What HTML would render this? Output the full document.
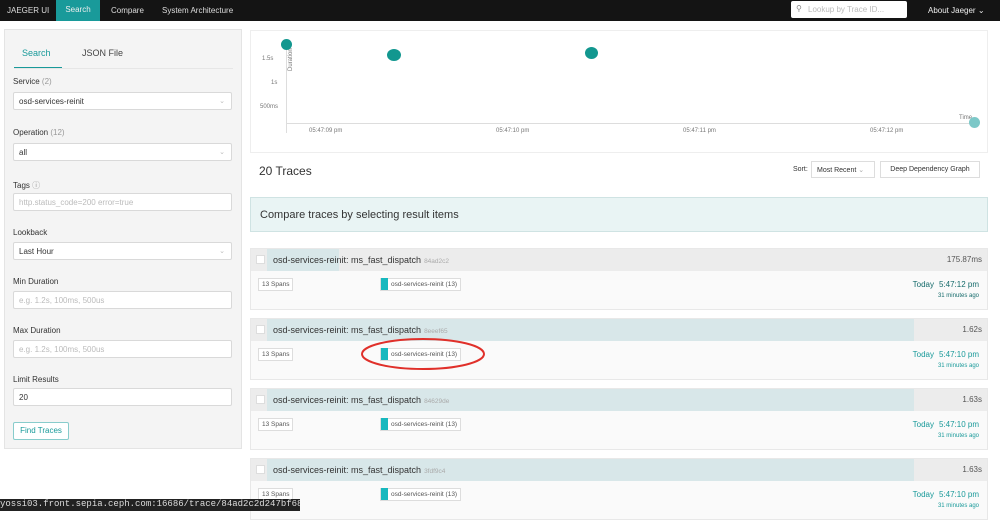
<!DOCTYPE html>
<html><head><meta charset="utf-8"><style>
*{box-sizing:border-box;margin:0;padding:0}
body{width:1000px;height:508px;overflow:hidden;background:#fff;font-family:"Liberation Sans",sans-serif;color:#333;position:relative}
.nav{position:absolute;left:0;top:0;width:1000px;height:21px;background:#141414;color:#ddd;font-size:8px}
.nav span{position:absolute;top:6px}
.nav .act{position:absolute;left:56px;top:0;width:44px;height:21px;background:#199a9a;color:#eee;text-align:center;line-height:20px}
.lookup{position:absolute;left:791px;top:1px;width:116px;height:17px;background:#fff;border-radius:2px;color:#bbb;font-size:8px;padding:4px 0 0 17px}
.side{position:absolute;left:4px;top:29px;width:238px;height:420px;background:#f4f4f4;border:1px solid #e4e4e4}
.lab{position:absolute;left:13px;font-size:8px;color:#333}
.lab i{font-style:normal;color:#999}
.inp{position:absolute;left:13px;width:219px;height:18px;background:#fff;border:1px solid #d9d9d9;border-radius:2px;font-size:8px;padding:4px 5px;color:#333}
.inp.ph{color:#bbb}
.chev{position:absolute;right:6px;top:4px;color:#bbb;font-size:7px}
.chart{position:absolute;left:250px;top:30px;width:738px;height:123px;border:1px solid #eee}
.dot{position:absolute;border-radius:50%;background:#12978f}
.tick{position:absolute;font-size:6px;color:#777}
.item{position:absolute;left:250px;width:738px;height:62px;background:#fafafa;border:1px solid #e8e8e8}
.hd{position:absolute;left:0;top:0;width:736px;height:22px;background:#ececec}
.bar{position:absolute;left:16px;top:0;height:22px;background:#d8e7e9}
.cb{position:absolute;left:5px;top:6px;width:9px;height:9px;background:#fff;border:1px solid #ddd}
.tt{position:absolute;left:22px;top:6px;font-size:9px;color:#333}
.tt i{font-style:normal;color:#aaa;font-size:6.5px;margin-left:3px}
.dur{position:absolute;right:5px;top:6px;font-size:8px;color:#555}
.spans{position:absolute;left:7px;top:29px;border:1px solid #ddd;background:#fff;font-size:6.5px;padding:2px 3px;color:#555}
.svc{position:absolute;left:129px;top:29px;border:1px solid #ddd;background:#fff;font-size:6.5px;padding:2px 3px 2px 10px;color:#555}
.svc b{position:absolute;left:0;top:-1px;width:7px;height:12px;background:#17b8be}
.today{position:absolute;right:53px;top:31px;font-size:8px;color:#199a9a}
.tm{position:absolute;right:8px;top:31px;font-size:8px;color:#199a9a}
.ago{position:absolute;right:8px;top:44px;font-size:6px;color:#199a9a}
</style></head><body>
<div class="nav"><span style="left:7px">JAEGER UI</span><div class="act">Search</div><span style="left:111px">Compare</span><span style="left:162px">System Architecture</span>
<div class="lookup"><span style="position:absolute;left:5px;top:3px;color:#888">&#9906;</span>Lookup by Trace ID...</div><span style="left:928px;color:#eee">About Jaeger ⌄</span></div>

<div class="side">
<div style="position:absolute;left:17px;top:18px;font-size:9px;color:#199a9a">Search</div>
<div style="position:absolute;left:77px;top:18px;font-size:9px;color:#444">JSON File</div>
<div style="position:absolute;left:9px;top:37px;width:48px;height:2px;background:#199a9a"></div>
<div style="position:absolute;left:9px;top:38px;width:219px;height:1px;background:#e6e6e6"></div>
</div>
<div class="lab" style="top:77px">Service <i>(2)</i></div>
<div class="inp" style="top:92px">osd-services-reinit<span class="chev">⌄</span></div>
<div class="lab" style="top:128px">Operation <i>(12)</i></div>
<div class="inp" style="top:143px">all<span class="chev">⌄</span></div>
<div class="lab" style="top:180px">Tags <i>ⓘ</i></div>
<div class="inp ph" style="top:193px">http.status_code=200 error=true</div>
<div class="lab" style="top:228px">Lookback</div>
<div class="inp" style="top:242px">Last Hour<span class="chev">⌄</span></div>
<div class="lab" style="top:277px">Min Duration</div>
<div class="inp ph" style="top:291px">e.g. 1.2s, 100ms, 500us</div>
<div class="lab" style="top:326px">Max Duration</div>
<div class="inp ph" style="top:340px">e.g. 1.2s, 100ms, 500us</div>
<div class="lab" style="top:375px">Limit Results</div>
<div class="inp" style="top:388px">20</div>
<div style="position:absolute;left:13px;top:422px;width:56px;height:18px;border:1px solid #8cc;border-radius:2px;background:#fff;color:#199a9a;font-size:8px;text-align:center;line-height:16px">Find Traces</div>

<div class="chart">
<div style="position:absolute;left:35px;top:10px;width:1px;height:92px;background:#ddd"></div>
<div style="position:absolute;left:35px;top:92px;width:690px;height:1px;background:#ddd"></div>
<div class="tick" style="left:11px;top:25px">1.5s</div>
<div class="tick" style="left:20px;top:49px">1s</div>
<div class="tick" style="left:9px;top:73px">500ms</div>
<div class="tick" style="left:37px;top:40px;transform:rotate(-90deg);transform-origin:left top;white-space:nowrap">Duration</div>
<div class="tick" style="left:58px;top:97px">05:47:09 pm</div>
<div class="tick" style="left:245px;top:97px">05:47:10 pm</div>
<div class="tick" style="left:432px;top:97px">05:47:11 pm</div>
<div class="tick" style="left:619px;top:97px">05:47:12 pm</div>
<div class="tick" style="left:708px;top:84px">Time</div>
<div class="dot" style="left:30px;top:8px;width:11px;height:11px"></div>
<div class="dot" style="left:136px;top:18px;width:14px;height:12px"></div>
<div class="dot" style="left:334px;top:16px;width:13px;height:12px"></div>
<div class="dot" style="left:718px;top:86px;width:11px;height:11px;background:#7cc8c8"></div>
</div>

<div style="position:absolute;left:259px;top:164px;font-size:12px;color:#333">20 Traces</div>
<div style="position:absolute;left:793px;top:166px;font-size:7px">Sort:</div>
<div style="position:absolute;left:811px;top:161px;width:64px;height:17px;border:1px solid #ddd;font-size:7px;padding:4px 5px">Most Recent <span style="color:#aaa">⌄</span></div>
<div style="position:absolute;left:880px;top:161px;width:100px;height:17px;border:1px solid #ddd;font-size:7px;text-align:center;line-height:15px">Deep Dependency Graph</div>
<div style="position:absolute;left:250px;top:197px;width:738px;height:35px;background:#e9f4f4;border:1px solid #cfe3e3;font-size:11px;padding:11px 9px;color:#333">Compare traces by selecting result items</div>

<div class="item" style="top:248px"><div class="hd"><div class="bar" style="width:72px"></div><div class="cb"></div><div class="tt">osd-services-reinit: ms_fast_dispatch<i>84ad2c2</i></div><div class="dur">175.87ms</div></div>
<div class="spans">13 Spans</div><div class="svc"><b></b>osd-services-reinit (13)</div><div class="today" style="color:#156b6b">Today</div><div class="tm" style="color:#156b6b">5:47:12 pm</div><div class="ago" style="color:#156b6b">31 minutes ago</div></div>

<div class="item" style="top:318px"><div class="hd"><div class="bar" style="width:647px"></div><div class="cb"></div><div class="tt">osd-services-reinit: ms_fast_dispatch<i>8eeef65</i></div><div class="dur">1.62s</div></div>
<div class="spans">13 Spans</div><div class="svc"><b></b>osd-services-reinit (13)</div><div class="today">Today</div><div class="tm">5:47:10 pm</div><div class="ago">31 minutes ago</div></div>

<div class="item" style="top:388px"><div class="hd"><div class="bar" style="width:647px"></div><div class="cb"></div><div class="tt">osd-services-reinit: ms_fast_dispatch<i>84629de</i></div><div class="dur">1.63s</div></div>
<div class="spans">13 Spans</div><div class="svc"><b></b>osd-services-reinit (13)</div><div class="today">Today</div><div class="tm">5:47:10 pm</div><div class="ago">31 minutes ago</div></div>

<div class="item" style="top:458px"><div class="hd"><div class="bar" style="width:647px"></div><div class="cb"></div><div class="tt">osd-services-reinit: ms_fast_dispatch<i>3fdf9c4</i></div><div class="dur">1.63s</div></div>
<div class="spans">13 Spans</div><div class="svc"><b></b>osd-services-reinit (13)</div><div class="today">Today</div><div class="tm">5:47:10 pm</div><div class="ago">31 minutes ago</div></div>

<svg style="position:absolute;left:360px;top:337px" width="126" height="34"><ellipse cx="63" cy="17" rx="61" ry="15" fill="none" stroke="#e0302a" stroke-width="2"/></svg>

<div style="position:absolute;left:0;top:499px;width:300px;height:12px;background:#222;color:#ddd;font-family:'Liberation Mono',monospace;font-size:9px;line-height:11px;white-space:nowrap;overflow:hidden">yossi03.front.sepia.ceph.com:16686/trace/84ad2c2d247bf683</div>
</body></html>
